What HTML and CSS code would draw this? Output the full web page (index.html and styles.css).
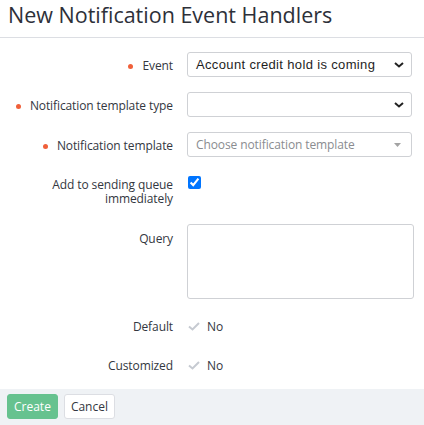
FILE: index.html
```html
<!DOCTYPE html>
<html>

<head>
    <meta charset='utf-8'>
    <title>New Notification Event Handlers</title>
    <meta name='viewport' content='width=device-width, initial-scale=1'>
    <link rel="stylesheet" href="styles.css">
</head>

<body>
    <div class="header">
        <h1 class="title">New Notification Event Handlers</h1>
    </div>

    <form class="form">
        <div class="row">
            <label class="label required">Event</label>
            <div class="select">
                <span class="selectText">Account credit hold is coming</span>
                <svg class="chevron" width="10" height="6" viewBox="0 0 10 6">
                    <polyline points="1,1 5,4.5 9,1" fill="none" stroke="#222" stroke-width="2" />
                </svg>
            </div>
        </div>

        <div class="row">
            <label class="label required">Notification template type</label>
            <div class="select">
                <span class="selectText"></span>
                <svg class="chevron" width="10" height="6" viewBox="0 0 10 6">
                    <polyline points="1,1 5,4.5 9,1" fill="none" stroke="#222" stroke-width="2" />
                </svg>
            </div>
        </div>

        <div class="row">
            <label class="label required">Notification template</label>
            <div class="select">
                <span class="placeholder">Choose notification template</span>
                <svg class="triangle" width="7" height="4" viewBox="0 0 7 4">
                    <polygon points="0,0 7,0 3.5,4" fill="#a3a3a3" />
                </svg>
            </div>
        </div>

        <div class="row rowCheck">
            <label class="label">Add to sending queue immediately</label>
            <input class="checkbox" type="checkbox" checked>
        </div>

        <div class="row rowQuery">
            <label class="label">Query</label>
            <textarea class="textarea"></textarea>
        </div>

        <div class="row rowStatic">
            <label class="label">Default</label>
            <div class="value">
                <svg width="12" height="9" viewBox="0 0 12 9">
                    <polyline points="1,4.5 4.5,7.5 11,1" fill="none" stroke="#c6cad1" stroke-width="2" />
                </svg>
                <span>No</span>
            </div>
        </div>

        <div class="row rowStatic">
            <label class="label">Customized</label>
            <div class="value">
                <svg width="12" height="9" viewBox="0 0 12 9">
                    <polyline points="1,4.5 4.5,7.5 11,1" fill="none" stroke="#c6cad1" stroke-width="2" />
                </svg>
                <span>No</span>
            </div>
        </div>
    </form>

    <div class="footer">
        <button class="btn btnPrimary" type="button">Create</button>
        <button class="btn" type="button">Cancel</button>
    </div>
</body>

</html>
```

FILE: styles.css
```css
body {
    margin: 0;
    background: white;
    color: #333741;
    font-family: "Open Sans", sans-serif;
    font-size: 12px;
    letter-spacing: -0.1px;
}

.header {
    height: 37px;
    padding: 0 8px;
    border-bottom: 1px solid #dcdee3;
}

.title {
    margin: 0;
    font-size: 21.5px;
    font-weight: 400;
    line-height: 30px;
    letter-spacing: 0;
    color: #2d3039;
}

.form {
    display: flex;
    flex-direction: column;
    padding-top: 14px;
}

.row {
    display: flex;
    align-items: flex-start;
    margin-bottom: 15px;
}

.label {
    width: 187px;
    box-sizing: border-box;
    padding: 7px 14px 0 0;
    text-align: right;
    line-height: 14px;
    flex-shrink: 0;
}

.required::before {
    content: "";
    display: inline-block;
    width: 5px;
    height: 5px;
    margin: 0 9px 1px 0;
    border-radius: 50%;
    background: #f0603a;
    vertical-align: middle;
}

.select {
    display: flex;
    align-items: center;
    width: 225px;
    height: 25px;
    box-sizing: border-box;
    padding: 0 8px;
    border: 1px solid #cfd1d5;
    border-radius: 3px;
}

.selectText {
    flex: 1;
    font-family: "Liberation Sans", Arial, sans-serif;
    font-size: 13px;
    letter-spacing: 0.35px;
    color: #1e1e1e;
}

.placeholder {
    flex: 1;
    color: #8a8c90;
}

.chevron {
    margin-right: -1px;
}

.triangle {
    margin-right: 2px;
}

.rowCheck {
    margin-bottom: 18px;
}

.rowCheck .label {
    padding-top: 6px;
    padding-left: 40px;
}

.checkbox {
    width: 13px;
    height: 13px;
    margin: 4px 0 0 1px;
}

.rowQuery .label {
    padding-top: 8px;
}

.textarea {
    width: 227px;
    height: 75px;
    box-sizing: border-box;
    margin: 0;
    border: 1px solid #cfd1d5;
    border-radius: 3px;
    resize: none;
}

.rowStatic {
    align-items: center;
    height: 25px;
    margin-bottom: 14px;
}

.rowStatic .label {
    padding-top: 0;
}

.value {
    display: flex;
    align-items: center;
    gap: 7px;
    padding-left: 1px;
}

.footer {
    display: flex;
    gap: 6px;
    margin-top: -3px;
    padding: 5px 7px 7px;
    background: #eff2f5;
}

.btn {
    height: 25px;
    padding: 0 6px;
    border: 1px solid #dcdee3;
    border-radius: 3px;
    background: white;
    color: #333741;
    font-family: "Open Sans", sans-serif;
    font-size: 12px;
}

.btnPrimary {
    border-color: #66c28f;
    background: #66c28f;
    color: white;
}
```
